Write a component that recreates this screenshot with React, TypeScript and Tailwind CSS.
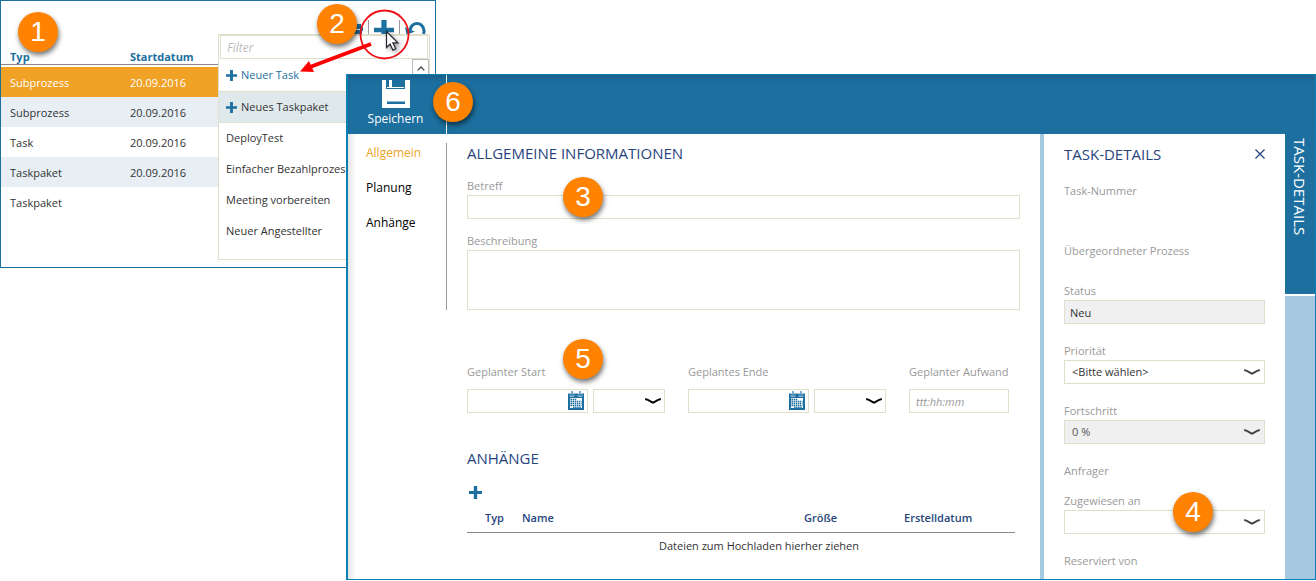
import React, { useState } from 'react';
import clsx from 'clsx';

interface TaskRow {
  id: number;
  type: string;
  start: string;
}

const ROWS: TaskRow[] = [
  { id: 1, type: 'Subprozess', start: '20.09.2016' },
  { id: 2, type: 'Subprozess', start: '20.09.2016' },
  { id: 3, type: 'Task', start: '20.09.2016' },
  { id: 4, type: 'Taskpaket', start: '20.09.2016' },
  { id: 5, type: 'Taskpaket', start: '' }
];

const TEMPLATES = ['DeployTest', 'Einfacher Bezahlprozess', 'Meeting vorbereiten', 'Neuer Angestellter'];

const TABS = ['Allgemein', 'Planung', 'Anhänge'];

const PlusIcon = ({ className }: { className?: string }) => (
  <svg viewBox="0 0 20 20" className={className} fill="currentColor" aria-hidden="true">
    <path d="M7.400 0h5.200v7.700H20v4.600h-7.400V20H7.400v-7.700H0V7.700h7.400z" />
  </svg>
);

const Chevron = ({ className }: { className?: string }) => (
  <svg
    viewBox="0 0 16 6"
    className={clsx('pointer-events-none absolute top-[9px] h-1.5 w-4', className)}
    fill="none"
    stroke="currentColor"
    strokeWidth="2"
    aria-hidden="true"
  >
    <path d="M.2 1C3 1.500 5.500 3.300 8 4.700 10.500 3.300 13 1.500 15.800 1" />
  </svg>
);

const CalendarIcon = () => (
  <svg viewBox="0 0 16 19" className="h-[19px] w-4" aria-hidden="true">
    <path d="M0 2.500h16V19H0z" fill="#1c6f9f" />
    <path d="M2 0h4v2.500H2zM10 0h4v2.500h-4z" fill="#fff" />
    <path d="M3.200 0h1.600v5H3.200zM11.200 0h1.600v5h-1.600z" fill="#5d9bc0" />
    <path d="M2 3.500v2h4v-2M10 3.500v2h4v-2" fill="none" stroke="#a6c9e2" strokeWidth=".8" />
    <path d="M2 7h12v10H2z" fill="#fff" />
    <path
      d="M2.500 8.500h6M2.500 10.500h11M2.500 12.500h11M2.500 14.500h11M5 16.500h8.500"
      stroke="#1c6f9f"
      strokeWidth="1.400"
      strokeDasharray="1.500 .6"
    />
  </svg>
);

const SaveIcon = () => (
  <svg viewBox="0 0 28 28" className="h-7 w-7" aria-hidden="true">
    <path d="M0 0h28v28H0z" fill="#fff" />
    <path d="M4 0h19v9H4z" fill="#1c6f9f" />
    <path d="M5 0h17v8H5z" fill="#fff" />
    <path d="M5 0h2v7H5zM10 0h12v7H10z" fill="#1c6f9f" />
    <path d="M8 0h2v7H8z" fill="#fff" />
    <path d="M5 21.500h18V24H5z" fill="#1c6f9f" />
  </svg>
);

const Badge = ({ n, className }: { n: number; className: string }) => (
  <span
    className={clsx(
      "absolute z-20 flex h-10 w-10 items-center justify-center rounded-full bg-[#ff8200] font-['Liberation_Sans',sans-serif] text-[28px] leading-none text-white shadow-[1px_3px_5px_rgba(0,0,0,0.55)]",
      className
    )}
  >
    {n}
  </span>
);

const fieldBox = 'block h-6 w-full rounded-none border border-[#e0dfcb] text-[11px] text-[#333] outline-none';
const labelText = 'block text-[11px] leading-[18px] text-[#999]';
const heading = 'text-[15px] leading-5 text-[#27457c]';

const DateGroup = ({ id, label }: { id: string; label: string }) => (
  <div>
    <label htmlFor={id} className={labelText}>{label}</label>
    <div className="mt-2 flex gap-[5px]">
      <div className="relative flex-1">
        <input id={id} type="text" className={clsx(fieldBox, 'pr-6 pl-2')} />
        <button type="button" aria-label="Kalender" className="absolute top-0.5 right-1">
          <CalendarIcon />
        </button>
      </div>
      <div className="relative w-[72px]">
        <select aria-label={`${label} Uhrzeit`} className={clsx(fieldBox, 'appearance-none')} />
        <Chevron className="right-1 text-black" />
      </div>
    </div>
  </div>
);

interface DetailSelectProps {
  id: string;
  label: string;
  value?: string;
  disabled?: boolean;
}

const DetailSelect = ({ id, label, value, disabled }: DetailSelectProps) => (
  <div>
    <label htmlFor={id} className={labelText}>{label}</label>
    <div className="relative">
      <select
        id={id}
        disabled={disabled}
        className={clsx(fieldBox, 'appearance-none pl-[7px] opacity-100', disabled && 'bg-[#f0f0f0] text-[#555]')}
      >
        {value && <option>{value}</option>}
      </select>
      <Chevron className="right-[5px] text-[#444]" />
    </div>
  </div>
);

const NewMenu = () => (
  <div className="absolute top-[33px] right-[5px] z-10 h-[226px] w-[212px] border border-[#e0dfcb] bg-white text-[11px] text-[#333]">
    <input
      type="text"
      placeholder="Filter"
      aria-label="Filter"
      className="mx-px block h-6 w-[208px] border border-[#e0dfcb] px-1.5 text-[12px] italic outline-none placeholder:text-[#bbb]"
    />
    <button type="button" className="flex h-8 w-full items-center gap-1 pl-[7px] text-[#1c6f9f]">
      <PlusIcon className="h-[11px] w-[11px]" />
      Neuer Task
    </button>
    <button type="button" className="flex h-8 w-full items-center gap-1 border-y border-[#e0dfcb] bg-[#dfe9ec] pl-[7px]">
      <PlusIcon className="h-[11px] w-[11px] text-[#1c6f9f]" />
      Neues Taskpaket
    </button>
    {TEMPLATES.map(name => (
      <button key={name} type="button" className="block h-[31px] w-full pl-[7px] text-left">
        {name}
      </button>
    ))}
    <button
      type="button"
      aria-label="Nach oben"
      className="absolute top-6 right-0 flex h-[18px] w-[17px] items-center justify-center border border-[#bbb] bg-white"
    >
      <svg viewBox="0 0 8 5" className="h-[5px] w-2" fill="none" stroke="#444" strokeWidth="1.300">
        <path d="M.7 4.400 4 1l3.300 3.400" />
      </svg>
    </button>
  </div>
);

const TaskList = () => (
  <section className="relative col-start-1 row-start-1 h-[268px] w-[436px] self-start border border-[#1c6f9f] bg-white">
    <div className="flex h-12 items-start justify-end gap-[5px] pt-[19px] pr-2 text-[#1c6f9f]">
      <button type="button" aria-label="Aktualisieren">
        <svg viewBox="0 0 20 20" className="h-5 w-5" fill="currentColor">
          <path d="M2 6h12V4h4v3h2v4h-1v3H2z" />
          <path d="M12 9h6v1h-6z" fill="#fff" />
        </svg>
      </button>
      <span className="h-5 w-px bg-[#999]" />
      <button type="button" aria-label="Neu">
        <PlusIcon className="h-5 w-5" />
      </button>
      <span className="h-5 w-px bg-[#999]" />
      <button type="button" aria-label="Rückgängig">
        <svg viewBox="0 0 22 22" className="h-[22px] w-[22px]" fill="none" stroke="currentColor" strokeWidth="3">
          <path d="M5 11a7 7.700 0 1 1 13.500 3" />
          <path d="M0 7l4 2.500 6 2L1.500 15z" fill="currentColor" stroke="none" />
        </svg>
      </button>
    </div>

    <table className="w-1/2 table-fixed border-collapse text-left text-[11px] text-[#333]">
      <thead>
        <tr className="h-4 leading-4 text-[#1c6f9f]">
          <th className="w-[120px] pl-[9px] font-bold shadow-[inset_0_-1px_0_#888]">Typ</th>
          <th className="pl-[9px] font-bold shadow-[inset_0_-1px_0_#888]">Startdatum</th>
        </tr>
      </thead>
      <tbody className="before:block before:h-0.5 before:content-['']">
        {ROWS.map((row, i) => (
          <tr
            key={row.id}
            className={clsx('h-[30px]', i === 0 && 'bg-[#f0a226] text-white', i > 0 && i % 2 === 1 && 'bg-[#e7eff5]')}
          >
            <td className="pt-0.5 pl-[9px]">{row.type}</td>
            <td className="pt-0.5 pl-[9px]">{row.start}</td>
          </tr>
        ))}
      </tbody>
    </table>

    <NewMenu />

    {/* click marker, arrow to the first entry and mouse pointer */}
    <svg viewBox="0 0 120 76" className="pointer-events-none absolute top-[3px] left-[293px] z-20 h-[76px] w-[120px]">
      <circle cx="90.500" cy="30.500" r="24" fill="none" stroke="#f01018" strokeWidth="1.800" />
      <path d="M77 40 16 63" stroke="#f00" strokeWidth="4" />
      <path d="M6 67.500 15 57l5 11z" fill="#f00" />
      <path
        d="M92.500 27.500v16l3.600-3.400 2.800 6 2.800-1.300-2.800-5.900h5z"
        fill="#fff"
        stroke="#223"
        strokeWidth="1.200"
        className="drop-shadow-[2px_2px_2px_rgba(0,0,0,0.4)]"
      />
    </svg>
    <Badge n={1} className="top-[11px] left-[17px]" />
    <Badge n={2} className="top-[3px] left-[316px]" />
  </section>
);

const TaskDetails = () => (
  <aside className="w-[245px] shrink-0 border-l-4 border-[#a6c9e2] px-5 pt-2.5">
    <div className="flex items-center justify-between">
      <h2 className={heading}>TASK-DETAILS</h2>
      <button type="button" aria-label="Schließen">
        <svg viewBox="0 0 10 10" className="h-2.5 w-2.5" stroke="#27457c" strokeWidth="1.300">
          <path d="M.5.500l9 9M9.500.500l-9 9" />
        </svg>
      </button>
    </div>
    <p className={clsx(labelText, 'mt-[18px] mb-[42px]')}>Task-Nummer</p>
    <p className={clsx(labelText, 'mb-[22px]')}>Übergeordneter Prozess</p>
    <div className="flex flex-col gap-[18px]">
      <div>
        <label htmlFor="status" className={labelText}>Status</label>
        <input id="status" type="text" readOnly value="Neu" className={clsx(fieldBox, 'bg-[#f0f0f0] px-[5px]')} />
      </div>
      <DetailSelect id="priority" label="Priorität" value="<Bitte wählen>" />
      <DetailSelect id="progress" label="Fortschritt" value="0 %" disabled />
      <div>
        <p className={clsx(labelText, 'mb-3')}>Anfrager</p>
        <div className="relative">
          <DetailSelect id="assignee" label="Zugewiesen an" />
          <Badge n={4} className="top-0 left-[109px]" />
        </div>
      </div>
      <p className={labelText}>Reserviert von</p>
    </div>
  </aside>
);

const TaskDialog = () => {
  const [tab, setTab] = useState('Allgemein');

  return (
    <section className="relative z-10 col-start-1 row-start-1 mt-[74px] mb-px ml-[346px] flex flex-col border border-l-2 border-[#0a7fb4] bg-white">
      <header className="relative flex h-[59px] shrink-0 bg-[#1c6f9f] shadow-[inset_0_6px_5px_-3px_rgba(0,0,0,0.15)]">
        <button
          type="button"
          className="flex w-[99px] flex-col items-center gap-px border-r border-white pt-[5px] pr-[3px] text-[12px] leading-5 text-white"
        >
          <SaveIcon />
          Speichern
        </button>
        <Badge n={6} className="top-[7px] left-[85px]" />
      </header>

      <div className="flex flex-1">
        <nav className="w-[99px] shrink-0 bg-linear-to-r from-[#e4e4e4] to-white to-[8px] pt-[9px]">
          <div className="flex h-[167px] flex-col items-start gap-[15px] border-r border-[#999] pl-[18px]">
            {TABS.map(t => (
              <button
                key={t}
                type="button"
                onClick={() => setTab(t)}
                className={clsx('text-[12px] leading-5', t === tab ? 'text-[#f0a226]' : 'text-black')}
              >
                {t}
              </button>
            ))}
          </div>
        </nav>

        <main className="min-w-0 flex-1 px-5 pt-[9px]">
          <h2 className={heading}>ALLGEMEINE INFORMATIONEN</h2>
          <div className="relative mt-3.5">
            <label htmlFor="subject" className={labelText}>Betreff</label>
            <input id="subject" type="text" className={clsx(fieldBox, 'px-2')} />
            <Badge n={3} className="top-0 left-24" />
          </div>
          <div className="mt-[13px]">
            <label htmlFor="description" className={labelText}>Beschreibung</label>
            <textarea
              id="description"
              className="block h-[60px] w-full resize-none border border-[#e0dfcb] p-2 text-[11px] outline-none"
            />
          </div>

          <div className="relative mt-[53px] grid grid-cols-[198fr_198fr_111fr] gap-x-[23px]">
            <DateGroup id="start" label="Geplanter Start" />
            <DateGroup id="end" label="Geplantes Ende" />
            <div>
              <label htmlFor="effort" className={labelText}>Geplanter Aufwand</label>
              <div className="mt-2 w-[100px]">
                <input
                  id="effort"
                  type="text"
                  placeholder="ttt:hh:mm"
                  className={clsx(fieldBox, 'px-1.5 italic placeholder:text-[#999]')}
                />
              </div>
            </div>
            <Badge n={5} className="-top-6 left-24" />
          </div>

          <h2 className={clsx(heading, 'mt-[35px]')}>ANHÄNGE</h2>
          <button type="button" aria-label="Anhang hinzufügen" className="mt-[18px] ml-0.5 block text-[#1c6f9f]">
            <PlusIcon className="h-[13px] w-[13px]" />
          </button>
          <div className="mt-[5px] pr-[5px]">
            <table className="w-full table-fixed border-collapse text-left text-[11px] text-[#333]">
              <thead>
                <tr className="h-7 border-b border-[#888] text-[#27457c]">
                  <th className="w-[55px] pl-[18px] font-semibold">Typ</th>
                  <th className="font-semibold">Name</th>
                  <th className="w-[100px] font-semibold">Größe</th>
                  <th className="w-[111px] font-semibold">Erstelldatum</th>
                </tr>
              </thead>
              <tbody>
                <tr className="h-7">
                  <td colSpan={4} className="pl-9 text-center">Dateien zum Hochladen hierher ziehen</td>
                </tr>
              </tbody>
            </table>
          </div>
        </main>

        <TaskDetails />

        <div className="flex w-[30px] shrink-0 flex-col gap-0.5">
          <button
            type="button"
            className="flex h-40 items-center bg-[#1c6f9f] pt-1 text-left text-[15px] leading-[30px] text-white [writing-mode:vertical-rl]"
          >
            <span className="h-full">TASK-DETAILS</span>
          </button>
          <div className="flex-1 bg-[#a6c9e2]" />
        </div>
      </div>
    </section>
  );
};

export default function App() {
  return (
    <div className="grid min-h-screen grid-cols-1 bg-white font-['Open_Sans',sans-serif]">
      <TaskList />
      <TaskDialog />
    </div>
  );
}
